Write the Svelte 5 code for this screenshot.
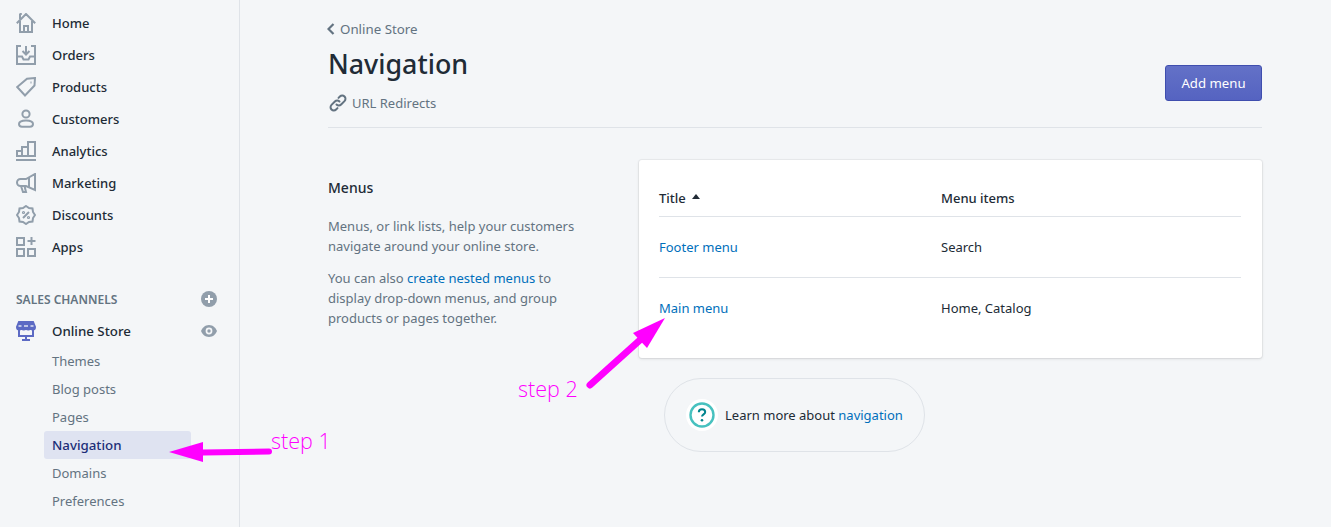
<script>
	const mainLinks = [
		{ label: 'Home', icon: 'home' },
		{ label: 'Orders', icon: 'orders' },
		{ label: 'Products', icon: 'products' },
		{ label: 'Customers', icon: 'customers' },
		{ label: 'Analytics', icon: 'analytics' },
		{ label: 'Marketing', icon: 'marketing' },
		{ label: 'Discounts', icon: 'discounts' },
		{ label: 'Apps', icon: 'apps' }
	];
	const storeLinks = ['Themes', 'Blog posts', 'Pages', 'Navigation', 'Domains', 'Preferences'];
</script>

{#snippet navIcon(name)}
	<svg class="nav-icon" viewBox="0 0 20 20" fill="none" stroke="currentColor" stroke-width="2">
		{#if name === 'home'}
			<path d="M.8 10.200 10 1l9.200 9.200M3.500 1h2.300M4 1v5M4 8v11h12V8M8 19v-6h4v6" />
		{:else if name === 'orders'}
			<path d="M5 1H1v18h18V1h-4M1 11.500h5l1.500 3h5l1.500-3H19M10 1v8.500M6.500 6l3.500 3.500L13.500 6" />
		{:else if name === 'products'}
			<path d="M19 1 18.500 8.500 9 18.500 1.200 10 11 1.800zM14.500 5.500h1" />
		{:else if name === 'customers'}
			<circle cx="10" cy="5" r="3.600" />
			<path d="M3 15c0-2.300 3-3.600 7-3.600s7 1.300 7 3.600c0 1.700-1 2.700-3 2.700H6c-2 0-3-1-3-2.700z" />
		{:else if name === 'analytics'}
			<path d="M0 19h20M1 15v-5h5v5zM6 15V6h6v9M12 15V1h7v14H1" />
		{:else if name === 'marketing'}
			<path d="M19 1v16L10 13H4.500a3.500 3.500 0 0 1 0-7H10zM5 13l2 6h3l-1.500-6M13 4v10" />
		{:else if name === 'discounts'}
			<path d="m10 1 3 2 3.500.5.500 3.500 2 3-2 3-.5 3.500-3.500.5-3 2-3-2-3.500-.5L3 13l-2-3 2-3 .5-3.500L7 3zM7 13l6-6" />
			<circle cx="7.500" cy="7.500" r=".6" />
			<circle cx="12.500" cy="12.500" r=".6" />
		{:else}
			<path d="M1 1h7v7H1zM1 12h7v7H1zM12 12h7v7h-7zM15.500 0v8M11.500 4h8" />
		{/if}
	</svg>
{/snippet}

<div class="frame">
	<aside class="sidebar">
		<ul class="nav-list">
			{#each mainLinks as link}
				<li class="nav-item">
					{@render navIcon(link.icon)}
					<span>{link.label}</span>
				</li>
			{/each}
		</ul>

		<div class="channels-head">
			<span>SALES CHANNELS</span>
			<svg class="side-action" viewBox="0 0 16 16">
				<circle cx="8" cy="8" r="8" fill="#919eab" />
				<path d="M8 4v8M4 8h8" stroke="#fff" stroke-width="2" />
			</svg>
		</div>

		<div class="nav-item store">
			<svg class="nav-icon" viewBox="0 0 20 20" fill="none" stroke="#5c6ac4" stroke-width="2">
				<path d="M3 1h14l2 5c0 1.500-1 2.500-2.200 2.500S14.500 7.500 14.500 6c0 1.500-1 2.500-2.200 2.500S10 7.500 10 6c0 1.500-1 2.500-2.300 2.500S5.500 7.500 5.500 6c0 1.500-1 2.500-2.300 2.500S1 7.500 1 6z" fill="#5c6ac4" />
				<path d="M3 9v6h14V9M10 15v4M6 19h8" />
				<path d="M2.500 5h3M8 5h4M14.500 5h3" stroke="#dfe3f1" stroke-width="1.500" />
			</svg>
			<span>Online Store</span>
			<svg class="side-action eye" viewBox="0 0 16 12">
				<path d="M8 0C4 0 1.200 3 0 6c1.200 3 4 6 8 6s6.800-3 8-6c-1.200-3-4-6-8-6z" fill="#919eab" />
				<circle cx="8" cy="6" r="3.400" fill="#f4f6f8" />
				<circle cx="8" cy="6" r="1.700" fill="#919eab" />
			</svg>
		</div>

		<ul class="sub-list">
			{#each storeLinks as link}
				<li class="sub-item" class:active={link === 'Navigation'}>{link}</li>
			{/each}
		</ul>
	</aside>

	<main class="page">
		<header class="page-head">
			<div>
				<div class="breadcrumb">
					<svg viewBox="0 0 8 12" fill="none" stroke="#637381" stroke-width="2.200"><path d="M6.500 1 1.500 6l5 5" /></svg>
					<span>Online Store</span>
				</div>
				<h1>Navigation</h1>
				<div class="redirects">
					<svg viewBox="0 0 18 18" fill="none" stroke="#637381" stroke-width="2" stroke-linecap="round">
						<path d="M7.500 10.500a3.200 3.200 0 0 0 4.600 0l3.400-3.400a3.200 3.200 0 0 0-4.600-4.600L9.500 3.900" />
						<path d="M10.500 7.500a3.200 3.200 0 0 0-4.600 0l-3.400 3.400a3.200 3.200 0 0 0 4.600 4.600l1.400-1.400" />
					</svg>
					<span>URL Redirects</span>
				</div>
			</div>
			<button class="add-button">Add menu</button>
		</header>

		<section class="layout">
			<div class="intro">
				<h2>Menus</h2>
				<p>Menus, or link lists, help your customers navigate around your online store.</p>
				<p>You can also <a href="#nested">create nested menus</a> to display drop-down menus, and group products or pages together.</p>
			</div>

			<div class="column">
				<div class="card">
					<div class="row head">
						<div class="title-cell">Title <i class="caret"></i></div>
						<div>Menu items</div>
					</div>
					<div class="row">
						<a href="#footer">Footer menu</a>
						<div>Search</div>
					</div>
					<div class="row last">
						<a href="#main">Main menu</a>
						<div>Home, Catalog</div>
					</div>
				</div>

				<div class="learn-more">
					<span class="help-ring">
						<svg viewBox="0 0 26 26" fill="none">
							<circle cx="13" cy="13" r="11.500" stroke="#47c1bf" stroke-width="2.400" />
							<path d="M9.800 10.200c0-1.900 1.400-3 3.200-3s3.200 1.100 3.200 2.800c0 2.400-3.200 2.300-3.200 4.600" stroke="#00848e" stroke-width="2" />
							<circle cx="13" cy="18.300" r="1.300" fill="#00848e" />
						</svg>
					</span>
					<span>Learn more about <a href="#navigation">navigation</a></span>
				</div>
			</div>
		</section>
	</main>

	<svg class="arrows" viewBox="0 0 1331 527" fill="#ff00ff" stroke="none">
		<path d="M269 451.500 203 452.500" stroke="#ff00ff" stroke-width="6" stroke-linecap="round" />
		<path d="M169 452 203 442v20z" />
		<path d="M590 385 640 340" stroke="#ff00ff" stroke-width="7" stroke-linecap="round" />
		<path d="M665 318 633 333 647 348z" />
	</svg>
	<span class="step one">step 1</span>
	<span class="step two">step 2</span>
</div>

<style>
	:global(body) {
		margin: 0;
		background: #f4f6f8;
	}

	.frame {
		position: relative;
		display: flex;
		width: 1331px;
		height: 527px;
		overflow: hidden;
		background: #f4f6f8;
		color: #212b36;
		font-family: 'Noto Sans', 'Open Sans', sans-serif;
		font-size: 13px;
		line-height: 20px;
	}

	.sidebar {
		box-sizing: border-box;
		flex: 0 0 240px;
		padding-top: 7px;
		border-right: 1px solid #dfe3e8;
	}

	ul {
		margin: 0;
		padding: 0;
		list-style: none;
	}

	.nav-item {
		display: flex;
		align-items: center;
		height: 32px;
		padding-left: 16px;
		color: #212b36;
		font-weight: 500;
	}

	.nav-icon {
		flex: none;
		width: 20px;
		height: 20px;
		margin-right: 16px;
		color: #919eab;
	}

	.channels-head {
		display: flex;
		align-items: center;
		justify-content: space-between;
		margin-top: 20px;
		padding: 2px 22px 0 16px;
		height: 30px;
		color: #637381;
		font-size: 12px;
		font-weight: 600;
	}

	.side-action {
		width: 16px;
		height: 16px;
		margin-top: -2px;
	}

	.store {
		padding-right: 22px;
	}

	.store span {
		flex: 1;
		font-size: 13.300px;
	}

	.eye {
		height: 12px;
		margin-top: 0;
	}

	.sub-item {
		box-sizing: border-box;
		width: 147px;
		height: 28px;
		margin-left: 44px;
		padding: 4px 8px;
		border-radius: 3px;
		color: #637381;
	}

	.sub-item.active {
		background: #dfe3f1;
		color: #202e78;
		font-weight: 500;
		font-size: 13.300px;
	}

	.page {
		box-sizing: border-box;
		flex: 0 0 1021px;
		padding: 19px 0 0 88px;
	}

	.page-head {
		display: flex;
		justify-content: space-between;
		align-items: flex-start;
		height: 108px;
		border-bottom: 1px solid #dfe3e8;
	}

	.breadcrumb,
	.redirects {
		display: flex;
		align-items: center;
		color: #637381;
	}

	.breadcrumb {
		font-size: 13.300px;
	}

	.breadcrumb svg {
		width: 8px;
		height: 12px;
		margin-left: -1px;
		margin-right: 5px;
	}

	.redirects svg {
		width: 18px;
		height: 18px;
		margin: 0 5px 0 1px;
	}

	h1 {
		margin: 0;
		padding: 9px 0 13px;
		font-size: 26.800px;
		font-weight: 500;
		line-height: 32px;
		color: #212b36;
	}

	.add-button {
		width: 97px;
		height: 36px;
		margin-top: 46px;
		padding: 0;
		border: 1px solid #3f4eae;
		border-radius: 3px;
		background: linear-gradient(#6371c7, #5563c1);
		color: #fff;
		font: inherit;
		font-size: 13.200px;
	}

	.layout {
		display: flex;
		padding-top: 32px;
	}

	.intro {
		box-sizing: border-box;
		flex: 0 0 311px;
		padding: 18px 50px 0 0;
		color: #637381;
	}

	h2 {
		margin: 0 0 18px;
		font-size: 14px;
		font-weight: 500;
		line-height: 20px;
		color: #212b36;
	}

	p {
		margin: 0 0 12px;
	}

	a {
		color: #006fbb;
		text-decoration: none;
	}

	.column {
		flex: 0 0 623px;
	}

	.card {
		box-sizing: border-box;
		height: 198px;
		padding: 18px 21px 0 20px;
		border-radius: 3px;
		background: #fff;
		box-shadow:
			0 0 0 1px rgba(63, 63, 68, 0.05),
			0 1px 3px 0 rgba(63, 63, 68, 0.15);
	}

	.row {
		display: grid;
		grid-template-columns: 282px 1fr;
		align-items: center;
		height: 60px;
		border-bottom: 1px solid #dfe3e8;
	}

	.row.head {
		height: 36px;
		padding-top: 2px;
		font-weight: 500;
	}

	.row.last {
		border-bottom: 0;
	}

	.title-cell {
		display: flex;
		align-items: center;
		gap: 6px;
	}

	.caret {
		width: 0;
		height: 0;
		border: 4px solid transparent;
		border-top: 0;
		border-bottom: 5px solid #212b36;
		margin-bottom: 3px;
	}

	.learn-more {
		box-sizing: border-box;
		display: flex;
		align-items: center;
		width: 261px;
		height: 74px;
		margin: 20px 0 0 25px;
		padding-left: 21px;
		border: 1px solid #dfe3e8;
		border-radius: 37px;
	}

	.help-ring {
		display: flex;
		align-items: center;
		justify-content: center;
		width: 32px;
		height: 32px;
		margin-right: 7px;
		border-radius: 50%;
		background: #fff;
	}

	.help-ring svg {
		width: 26px;
		height: 26px;
	}

	.arrows {
		position: absolute;
		inset: 0;
		width: 1331px;
		height: 527px;
		pointer-events: none;
	}

	.step {
		position: absolute;
		color: #ff00ff;
		font-family: 'Open Sans', sans-serif;
		font-size: 21.500px;
		font-weight: 300;
		line-height: 28px;
	}

	.step.one {
		left: 271px;
		top: 427px;
	}

	.step.two {
		left: 518px;
		top: 375px;
	}
</style>
